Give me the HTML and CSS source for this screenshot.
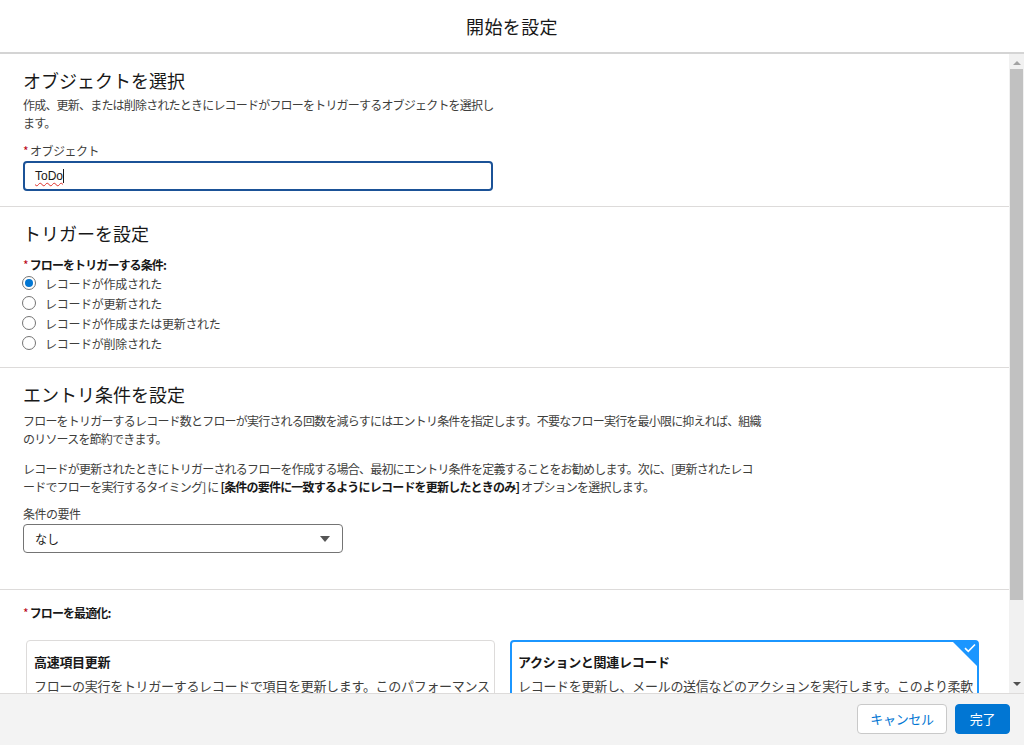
FILE: index.html
```html
<!DOCTYPE html>
<html lang="ja">
<head>
<meta charset="utf-8">
<title>開始を設定</title>
<link rel="stylesheet" href="styles.css">
</head>
<body>
<div class="modal">
  <header class="hdr"><h1 class="hdr-title">開始を設定</h1></header>
  <div class="body">
    <div class="content">
      <section class="sec sec-object">
        <h2 class="sec-title">オブジェクトを選択</h2>
        <p class="desc narrow">作成、更新、または削除されたときにレコードがフローをトリガーするオブジェクトを選択します。</p>
        <div class="label"><span class="req">*</span>オブジェクト</div>
        <div class="input"><span class="typo">ToDo</span><span class="caret"></span></div>
      </section>
      <section class="sec sec-trigger">
        <h2 class="sec-title">トリガーを設定</h2>
        <div class="label bold"><span class="req">*</span>フローをトリガーする条件:</div>
        <ul class="radios">
          <li class="radio"><span class="dot on"></span>レコードが作成された</li>
          <li class="radio"><span class="dot"></span>レコードが更新された</li>
          <li class="radio"><span class="dot"></span>レコードが作成または更新された</li>
          <li class="radio"><span class="dot"></span>レコードが削除された</li>
        </ul>
      </section>
      <section class="sec sec-entry">
        <h2 class="sec-title">エントリ条件を設定</h2>
        <p class="desc wide">フローをトリガーするレコード数とフローが実行される回数を減らすにはエントリ条件を指定します。不要なフロー実行を最小限に抑えれば、組織のリソースを節約できます。</p>
        <p class="desc wide para2">レコードが更新されたときにトリガーされるフローを作成する場合、最初にエントリ条件を定義することをお勧めします。次に、[更新されたレコ<br>ードでフローを実行するタイミング] に <b>[条件の要件に一致するようにレコードを更新したときのみ]</b> オプションを選択します。</p>
        <div class="label"><span>条件の要件</span></div>
        <div class="select"><span>なし</span><span class="caret-down"></span></div>
      </section>
      <section class="sec sec-opt">
        <div class="label bold"><span class="req">*</span>フローを最適化:</div>
        <div class="cards">
          <div class="card">
            <div class="card-title">高速項目更新</div>
            <div class="card-desc">フローの実行をトリガーするレコードで項目を更新します。このパフォーマンス</div>
          </div>
          <div class="card selected">
            <span class="corner"><svg class="check" viewBox="0 0 12 10" width="12" height="10"><path d="M1 5.2 L4.3 8.3 L11 1.5" fill="none" stroke="#fff" stroke-width="1.6"/></svg></span>
            <div class="card-title">アクションと関連レコード</div>
            <div class="card-desc">レコードを更新し、メールの送信などのアクションを実行します。このより柔軟</div>
          </div>
        </div>
      </section>
    </div>
    <div class="sbar">
      <span class="arrow up"></span>
      <div class="track"><div class="thumb"></div></div>
      <span class="arrow down"></span>
    </div>
  </div>
  <footer class="ftr">
    <button class="btn neutral">キャンセル</button>
    <button class="btn brand">完了</button>
  </footer>
</div>
</body>
</html>
```
FILE: styles.css
```css
* { box-sizing: border-box; }
html, body { margin: 0; padding: 0; height: 100%; }
body {
  font-family: "Noto Sans CJK JP", "Noto Sans", sans-serif;
  color: #181818;
  background: #fff;
  overflow: hidden;
}
.modal {
  display: flex;
  flex-direction: column;
  height: 745px;
}
.hdr {
  height: 54px;
  border-bottom: 2px solid #d4d4d4;
  display: flex;
  align-items: center;
  justify-content: center;
  flex: none;
}
.hdr-title {
  margin: 0;
  font-size: 18px;
  font-weight: 400;
  line-height: 24px;
  letter-spacing: 0.4px;
  color: #181818;
}
.body {
  flex: 1;
  display: flex;
  overflow: hidden;
  min-height: 0;
}
.content {
  flex: 1;
  overflow: hidden;
}
.sec {
  padding: 14px 23px 15px;
  border-bottom: 1px solid #dddbda;
}
.sec-title {
  margin: 0;
  font-size: 18px;
  font-weight: 400;
  line-height: 24px;
  color: #181818;
}
.desc {
  margin: 4px 0 0;
  font-size: 12px;
  line-height: 18px;
  letter-spacing: -0.8px;
  color: #3e3e3c;
}
.desc b { color: #181818; }
.narrow { max-width: 474px; }
.wide { max-width: 742px; }
.sec-entry .desc { margin-top: 6px; }
.sec-entry .para2 { margin-top: 12px; }
.label {
  margin-top: 11px;
  font-size: 12px;
  line-height: 16px;
  letter-spacing: -0.5px;
  color: #3e3e3c;
}
.label.bold { font-weight: 700; color: #181818; letter-spacing: -0.9px; }
.req { color: #ba0517; margin-right: 2px; font-weight: 400; }
.input {
  margin-top: 2px;
  width: 470px;
  height: 30px;
  border: 2px solid #1b5297;
  border-radius: 4px;
  padding: 0 10px;
  display: flex;
  align-items: center;
  font-family: "Liberation Sans", "Noto Sans", sans-serif;
  font-size: 12px;
  color: #181818;
}
.typo {
  text-decoration: underline wavy #e0302a;
  text-decoration-thickness: 1px;
  text-underline-offset: 2px;
}
.caret {
  display: inline-block;
  width: 1px;
  height: 14px;
  background: #181818;
}
.sec-trigger { padding-bottom: 14px; }
.sec-trigger .label { margin-top: 12px; }
.radios {
  list-style: none;
  margin: 0;
  padding: 0;
}
.radio {
  display: flex;
  align-items: center;
  height: 20px;
  font-size: 12px;
  letter-spacing: -0.3px;
  color: #3e3e3c;
}
.dot {
  width: 14px;
  height: 14px;
  border: 1px solid #747474;
  border-radius: 50%;
  margin-right: 9px;
  margin-left: -1px;
  display: flex;
  align-items: center;
  justify-content: center;
  flex: none;
}
.dot.on::after {
  content: "";
  width: 8px;
  height: 8px;
  border-radius: 50%;
  background: #0176d3;
}
.sec-entry { padding-bottom: 36px; }
.sec-entry .label { margin-top: 10px; }
.select {
  margin-top: 2px;
  width: 320px;
  height: 29px;
  border: 1px solid #747474;
  border-radius: 4px;
  padding: 0 12px 0 11px;
  display: flex;
  align-items: center;
  justify-content: space-between;
  font-size: 12px;
  color: #181818;
}
.caret-down {
  width: 0;
  height: 0;
  border-left: 5px solid transparent;
  border-right: 5px solid transparent;
  border-top: 6px solid #555;
}
.sec-opt {
  border-bottom: none;
  padding: 15px 29px 0 26px;
}
.sec-opt .label { margin-top: 0; margin-left: -3px; }
.cards {
  margin-top: 19px;
  display: grid;
  grid-template-columns: 469px 469px;
  gap: 15px;
}
.card {
  position: relative;
  border: 1px solid #dddbda;
  border-radius: 4px;
  padding: 13px 7px 20px;
  height: 90px;
}
.card.selected {
  border: 2px solid #1b96ff;
  padding: 12px 6px 20px;
}
.card-title {
  font-size: 13px;
  font-weight: 700;
  line-height: 16px;
  color: #181818;
  letter-spacing: -0.3px;
}
.card-desc {
  margin-top: 8px;
  font-size: 13px;
  line-height: 16px;
  letter-spacing: -0.3px;
  color: #3e3e3c;
  white-space: nowrap;
}
.corner {
  position: absolute;
  top: -1px;
  right: -1px;
  width: 0;
  height: 0;
  border-top: 26px solid #1b96ff;
  border-left: 26px solid transparent;
  border-top-right-radius: 3px;
}
.check {
  position: absolute;
  top: -24px;
  right: 2px;
}
.sbar {
  width: 15px;
  flex: none;
  background: #f1f1f1;
  display: flex;
  flex-direction: column;
  align-items: center;
  padding: 0 1px;
}
.arrow {
  flex: none;
  width: 0;
  height: 0;
  border-left: 4px solid transparent;
  border-right: 4px solid transparent;
}
.arrow.up { border-bottom: 4px solid #a3a3a3; margin: 7px 0 4px; }
.arrow.down { border-top: 4px solid #505050; margin: 4px 0 7px; }
.track {
  flex: 1;
  width: 100%;
}
.thumb {
  width: 100%;
  height: 531px;
  background: #c1c1c1;
}
.ftr {
  flex: none;
  height: 52px;
  border-top: 1px solid #dddbda;
  background: #f3f3f3;
  display: flex;
  align-items: center;
  justify-content: flex-end;
  gap: 8px;
  padding: 0 14px 2px;
}
.btn {
  height: 30px;
  border-radius: 4px;
  font-family: "Noto Sans CJK JP", "Noto Sans", sans-serif;
  font-size: 13px;
  padding: 0;
  white-space: nowrap;
  cursor: pointer;
  letter-spacing: -0.3px;
}
.btn.neutral {
  width: 90px;
  background: #fff;
  border: 1px solid #c9c9c9;
  color: #0176d3;
}
.btn.brand {
  width: 55px;
  background: #0176d3;
  border: 1px solid #0176d3;
  color: #fff;
}
```
